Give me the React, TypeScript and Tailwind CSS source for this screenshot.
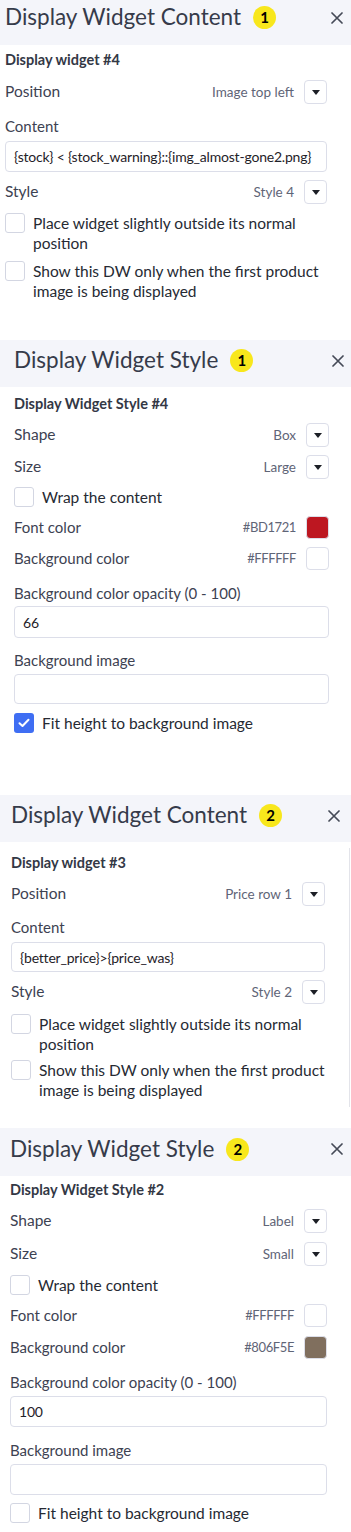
const font = { fontFamily: 'Lato, "Noto Sans", sans-serif' };

function CloseIcon() {
  return (
    <svg width="12" height="12" viewBox="0 0 12 12" className="shrink-0">
      <path d="M1 1L11 11M11 1L1 11" stroke="#454a57" strokeWidth="1.7" strokeLinecap="round" />
    </svg>
  );
}

function Header({ title, n, className }: { title: string; n: number; className: string }) {
  return (
    <div className={`flex items-center bg-[#f4f5fa] ${className}`}>
      <span className="text-[22.5px] leading-none text-[#363b4a]">{title}</span>
      <span className="ml-[12px] w-[23px] h-[23px] rounded-full bg-[#f8e71c] flex items-center justify-center text-[15px] font-bold text-black">
        {n}
      </span>
      <span className="ml-auto">
        <CloseIcon />
      </span>
    </div>
  );
}

function Dropdown() {
  return (
    <div className="ml-[10px] w-[23px] h-[24px] border border-[#dcdee9] rounded-[4px] bg-white flex items-center justify-center shrink-0">
      <svg width="8" height="5" viewBox="0 0 8 5">
        <path d="M0 0H8L4 5Z" fill="#1c1f26" />
      </svg>
    </div>
  );
}

function SelectRow({ label, value, className }: { label: string; value: string; className: string }) {
  return (
    <div className={`flex items-center ${className}`}>
      <span className="text-[15.5px] text-[#3d4252]">{label}</span>
      <span className="ml-auto text-[13.5px] text-[#5f6577]">{value}</span>
      <Dropdown />
    </div>
  );
}

function ColorRow({ label, value, color, className }: { label: string; value: string; color: string; className: string }) {
  return (
    <div className={`flex items-center ${className}`}>
      <span className="text-[15px] text-[#3d4252]">{label}</span>
      <span className="ml-auto text-[13px] tracking-[-0.4px] text-[#5f6577]">{value}</span>
      <div
        className="ml-[10px] w-[23px] h-[23px] border border-[#dcdee9] rounded-[4px] shrink-0"
        style={{ backgroundColor: color }}
      />
    </div>
  );
}

function Check({ label, checked, className }: { label: React.ReactNode; checked?: boolean; className: string }) {
  return (
    <div className={`flex items-start ${className}`}>
      {checked ? (
        <div className="w-[20px] h-[20px] rounded-[3px] bg-[#3f6ef3] flex items-center justify-center shrink-0">
          <svg width="12" height="10" viewBox="0 0 12 10">
            <path d="M1.5 5.2L4.5 8L10.5 1.8" stroke="white" strokeWidth="2" fill="none" strokeLinecap="round" strokeLinejoin="round" />
          </svg>
        </div>
      ) : (
        <div className="w-[20px] h-[20px] rounded-[3px] border border-[#d3d6e2] bg-white shrink-0" />
      )}
      <span className="ml-[8px] text-[15.5px] leading-[20px] text-[#262a33] whitespace-nowrap">{label}</span>
    </div>
  );
}

function Label({ text, className }: { text: string; className: string }) {
  return <div className={`text-[15px] leading-[20px] text-[#3d4252] ${className}`}>{text}</div>;
}

function Input({ value, className }: { value: string; className: string }) {
  return (
    <div className={`flex items-center border border-[#dcdee9] rounded-[4px] px-[8px] text-[14px] tracking-[-0.2px] whitespace-nowrap overflow-hidden text-[#1f2229] bg-white ${className}`}>
      {value}
    </div>
  );
}

function Bold({ text, className }: { text: string; className: string }) {
  return <div className={`text-[14.5px] leading-[20px] font-bold text-[#333845] ${className}`}>{text}</div>;
}

export default function App() {
  return (
    <div className="w-[351px] bg-white" style={font}>
      {/* panel 1 */}
      <div className="h-[340px]">
        <Header title="Display Widget Content" n={1} className="h-[45px] pl-[5px] pr-[8px] pb-[10px]" />
        <div className="pl-[5px] w-[327px]">
          <Bold text="Display widget #4" className="mt-[5px]" />
          <SelectRow label="Position" value="Image top left" className="mt-[10px]" />
          <Label text="Content" className="mt-[12px]" />
          <Input value="{stock} < {stock_warning}::{img_almost-gone2.png}" className="mt-[5px] h-[31px]" />
          <SelectRow label="Style" value="Style 4" className="mt-[8px]" />
          <Check className="mt-[9px]" label={<>Place widget slightly outside its normal<br />position</>} />
          <Check className="mt-[8px]" label={<>Show this DW only when the first product<br />image is being displayed</>} />
        </div>
      </div>

      {/* panel 2 */}
      <div className="h-[455px]">
        <Header title="Display Widget Style" n={1} className="h-[47px] pl-[14px] pr-[7px] pb-[6px]" />
        <div className="pl-[14px] w-[329px]">
          <Bold text="Display Widget Style #4" className="mt-[7px]" />
          <SelectRow label="Shape" value="Box" className="mt-[9px]" />
          <SelectRow label="Size" value="Large" className="mt-[8px]" />
          <Check className="mt-[8px]" label="Wrap the content" />
          <ColorRow label="Font color" value="#BD1721" color="#BD1721" className="mt-[9px]" />
          <ColorRow label="Background color" value="#FFFFFF" color="#FFFFFF" className="mt-[8px]" />
          <Label text="Background color opacity (0 - 100)" className="mt-[13px]" />
          <Input value="66" className="mt-[3px] h-[32px]" />
          <Label text="Background image" className="mt-[12px]" />
          <Input value="" className="mt-[4px] h-[30px]" />
          <Check className="mt-[9px]" checked label="Fit height to background image" />
        </div>
      </div>

      {/* panel 3 */}
      <div className="h-[333px]">
        <Header title="Display Widget Content" n={2} className="h-[47px] pl-[11px] pr-[11px] pb-[6px]" />
        <div className="flex">
          <div className="pl-[11px] w-[325px] pb-[8px]">
            <Bold text="Display widget #3" className="mt-[11px]" />
            <SelectRow label="Position" value="Price row 1" className="mt-[9px]" />
            <Label text="Content" className="mt-[11px]" />
            <Input value="{better_price}>{price_was}" className="mt-[5px] h-[30px]" />
            <SelectRow label="Style" value="Style 2" className="mt-[8px]" />
            <Check className="mt-[10px]" label={<>Place widget slightly outside its normal<br />position</>} />
            <Check className="mt-[6px]" label={<>Show this DW only when the first product<br />image is being displayed</>} />
          </div>
          <div className="ml-auto mr-[1px] mt-[6px] w-[1px] h-[259px] bg-[#e3e4ea]" />
        </div>
      </div>

      {/* panel 4 */}
      <div className="h-[404px]">
        <Header title="Display Widget Style" n={2} className="h-[48px] pl-[10px] pr-[8px] pb-[6px]" />
        <div className="pl-[10px] w-[327px]">
          <Bold text="Display Widget Style #2" className="mt-[4px]" />
          <SelectRow label="Shape" value="Label" className="mt-[9px]" />
          <SelectRow label="Size" value="Small" className="mt-[9px]" />
          <Check className="mt-[9px]" label="Wrap the content" />
          <ColorRow label="Font color" value="#FFFFFF" color="#FFFFFF" className="mt-[9px]" />
          <ColorRow label="Background color" value="#806F5E" color="#806F5E" className="mt-[9px]" />
          <Label text="Background color opacity (0 - 100)" className="mt-[13px]" />
          <Input value="100" className="mt-[4px] h-[31px]" />
          <Label text="Background image" className="mt-[13px]" />
          <Input value="" className="mt-[4px] h-[31px]" />
          <Check className="mt-[8px]" label="Fit height to background image" />
        </div>
      </div>
    </div>
  );
}
